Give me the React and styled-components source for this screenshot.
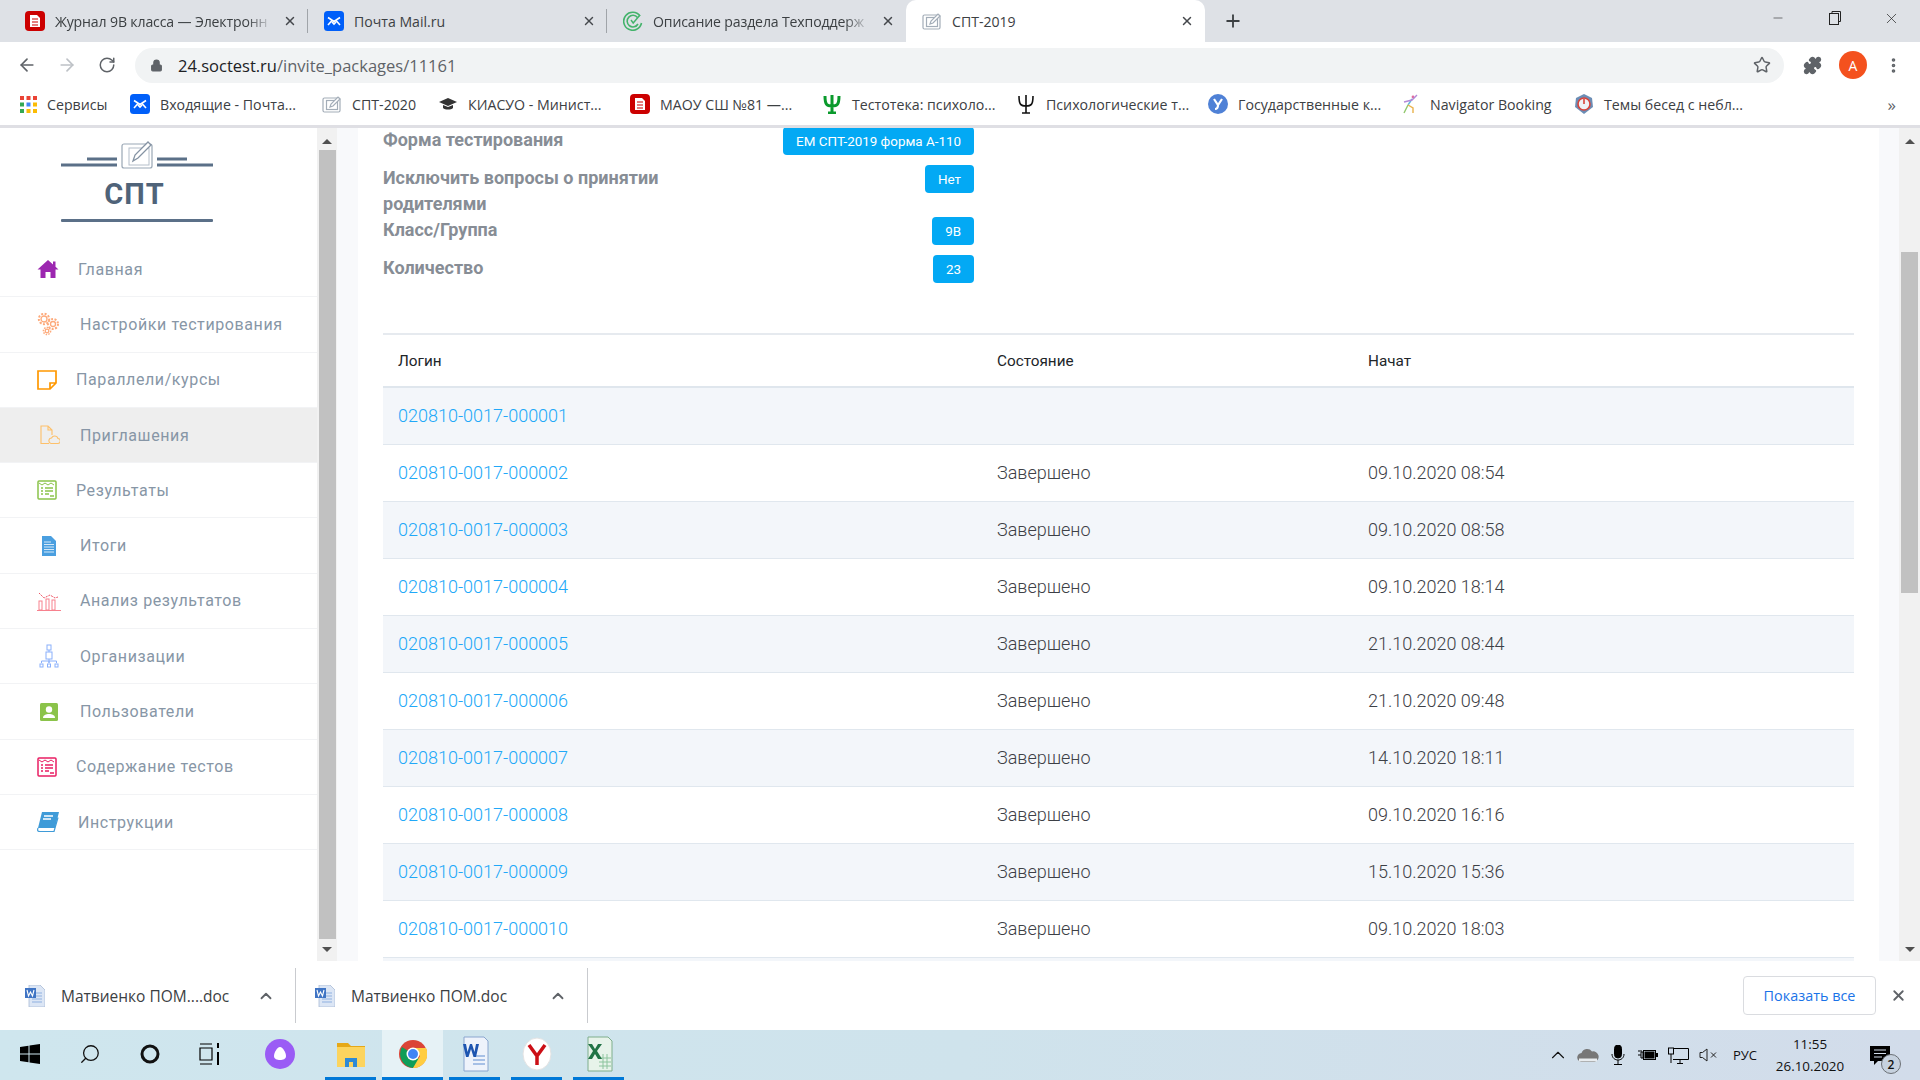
import React from "react";
import styled, { createGlobalStyle } from "styled-components";
import { ArrowLeft, ArrowRight, RotateCw, Lock, Star, Puzzle, MoreVertical, Plus, X, Minus, ChevronUp, Search } from "lucide-react";

const GlobalStyle = createGlobalStyle`
    html, body { margin: 0; padding: 0; background: #fff; }
    * { box-sizing: border-box; }
`;

const UI_FONT = `"Open Sans", "Noto Sans", sans-serif`;

const Page = styled.div`
    width: 1920px;
    height: 1080px;
    display: flex;
    flex-direction: column;
    overflow: hidden;
    font-family: Roboto, sans-serif;
`;

/* browser chrome */
const TabStrip = styled.div`
    height: 42px;
    flex: none;
    background: #dee1e6;
    display: flex;
    align-items: stretch;
    padding-left: 9px;
    font-family: ${UI_FONT};
`;

const Tab = styled.div`
    width: 299px;
    display: flex;
    align-items: center;
    padding: 0 11px 0 16px;
    gap: 10px;
    position: relative;
    background: ${p => (p.$active ? "#fff" : "transparent")};
    border-radius: ${p => (p.$active ? "10px 10px 0 0" : "0")};
`;

const TabSep = styled.span`
    position: absolute;
    right: 0;
    top: 9px;
    bottom: 9px;
    width: 1px;
    background: #a0a4a9;
`;

const TabTitle = styled.span`
    flex: 1;
    min-width: 0;
    font-size: 14.1px;
    color: #3c4043;
    white-space: nowrap;
    overflow: hidden;
    ${p => p.$fade && "letter-spacing: -0.15px; mask-image: linear-gradient(to right, #000 88%, transparent 100%);"}
`;

const TabClose = styled.span`
    width: 14px;
    display: flex;
    justify-content: center;
    color: #45484c;
`;

const NewTab = styled.div`
    width: 56px;
    display: flex;
    align-items: center;
    justify-content: center;
    color: #3c4043;
`;

const WindowControls = styled.div`
    margin-left: auto;
    display: flex;
    align-items: flex-start;
    color: #222;
`;

const WindowButton = styled.div`
    width: 57px;
    height: 36px;
    display: flex;
    align-items: center;
    justify-content: center;
`;

const Toolbar = styled.div`
    height: 41px;
    flex: none;
    background: #fff;
    display: flex;
    align-items: center;
    padding: 5px 0 0 7px;
    color: #5f6368;
`;

const NavButton = styled.div`
    width: 40px;
    display: flex;
    justify-content: center;
    color: ${p => (p.$off ? "#bdc1c6" : "#5f6368")};
`;

const Omnibox = styled.div`
    width: 1649px;
    height: 35px;
    margin-left: 8px;
    border-radius: 18px;
    background: #f1f3f4;
    display: flex;
    align-items: center;
    padding: 0 13px 0 15px;
    font-family: ${UI_FONT};
    font-size: 16.5px;
    color: #5f6368;
`;

const UrlText = styled.span`
    margin-left: 15px;
    flex: 1;
    b { font-weight: 400; color: #202124; }
`;

const ToolbarRight = styled.div`
    display: flex;
    align-items: center;
    margin-left: 19px;
    gap: 17px;
`;

const Avatar = styled.div`
    width: 28px;
    height: 28px;
    border-radius: 50%;
    background: #f4511e;
    color: #fff;
    font-family: ${UI_FONT};
    font-size: 14px;
    display: flex;
    align-items: center;
    justify-content: center;
`;

const BookmarksBar = styled.div`
    height: 42px;
    flex: none;
    background: #fff;
    display: flex;
    align-items: center;
    padding-left: 20px;
    font-family: ${UI_FONT};
    font-size: 14.2px;
    color: #3c4043;
`;

const Bookmark = styled.div`
    width: ${p => p.$w}px;
    flex: none;
    display: flex;
    align-items: center;
    gap: 10px;
    white-space: nowrap;
`;

const BookmarkMore = styled.div`
    margin-left: auto;
    margin-right: 24px;
    font-size: 17px;
    color: #5f6368;
    line-height: 1;
`;

const ChromeLine = styled.div`
    height: 3px;
    flex: none;
    background: #dfdfe4;
`;

/* page */
const Viewport = styled.div`
    flex: 1;
    min-height: 0;
    display: flex;
    background: #fff;
`;

const Sidebar = styled.nav`
    width: 317px;
    flex: none;
    overflow: hidden;
`;

const LogoBlock = styled.div`
    height: 114px;
    padding-top: 10px;
    display: flex;
    flex-direction: column;
    align-items: center;
    width: 273px;
`;

const LogoText = styled.div`
    font-size: 29px;
    font-weight: 700;
    color: #4f6379;
    letter-spacing: 1px;
    line-height: 30px;
    margin: 6px 4px 0 0;
`;

const LogoRule = styled.div`
    width: 152px;
    height: 3px;
    margin-top: 10px;
    background: #5b7088;
    border-radius: 1px;
`;

const MenuItem = styled.div`
    height: 55.3px;
    display: flex;
    align-items: center;
    padding-left: 37px;
    border-bottom: 1px solid #f2f3f5;
    background: ${p => (p.$active ? "#eeeeee" : "transparent")};
`;

const MenuIcon = styled.span`
    width: ${p => p.$w}px;
    padding-left: ${p => p.$ox || 0}px;
    flex: none;
    display: flex;
    align-items: center;
`;

const MenuLabel = styled.span`
    font-size: 16px;
    letter-spacing: 0.6px;
    color: #8796a6;
    white-space: nowrap;
`;

const Scrollbar = styled.div`
    width: ${p => p.$w}px;
    flex: none;
    background: #f1f1f1;
    display: flex;
    flex-direction: column;
    padding: 0 2px;
`;

const ScrollArrow = styled.div`
    width: 0;
    height: 0;
    border-left: 5px solid transparent;
    border-right: 5px solid transparent;
    ${p => (p.$down
        ? "border-top: 5px solid #505050; margin-top: auto; margin-bottom: 9px;"
        : "border-bottom: 5px solid #505050; margin-top: 11px;")}
    align-self: center;
`;

const ScrollThumb = styled.div`
    margin-top: ${p => p.$top}px;
    height: ${p => p.$h}px;
    width: 17px;
    background: #c1c1c1;
`;

const Gutter = styled.div`
    width: ${p => p.$w}px;
    flex: none;
    background: #f8f9fb;
`;

const Main = styled.main`
    flex: 1;
    min-width: 0;
    padding: 0 25px;
    overflow: hidden;
`;

const InfoList = styled.div`
    width: 591px;
    height: 206px;
    margin-top: -1px;
`;

const InfoRow = styled.div`
    display: flex;
    justify-content: space-between;
    align-items: flex-start;
    margin-bottom: ${p => p.$mb}px;
`;

const InfoLabel = styled.div`
    width: 290px;
    font-size: 18px;
    font-weight: 700;
    line-height: 26px;
    color: #878d95;
`;

const Badge = styled.span`
    height: 28px;
    padding: 0 13px;
    border-radius: 4px;
    background: #03a9f4;
    color: #fff;
    font-size: 13.4px;
    display: flex;
    align-items: center;
    white-space: nowrap;
`;

const Table = styled.table`
    width: 1471px;
    table-layout: fixed;
    border-collapse: collapse;
`;

const HeadCell = styled.th`
    height: 53px;
    padding: 0 15px;
    text-align: left;
    font-size: 15.3px;
    font-weight: 400;
    color: #212529;
    border-top: 2px solid #e6eaef;
    border-bottom: 2px solid #dfe6ed;
`;

const Row = styled.tr`
    background: ${p => (p.$even ? "#fff" : "#f3f6fa")};
`;

const Cell = styled.td`
    height: 57px;
    padding: 0 15px;
    font-size: 18px;
    font-weight: 300;
    color: #3d4046;
    border-bottom: 1px solid #e0e7ee;
`;

const LoginLink = styled.a`
    color: #20a8f8;
    text-decoration: none;
`;

/* downloads shelf */
const Shelf = styled.div`
    height: 69px;
    flex: none;
    background: #fff;
    display: flex;
    align-items: center;
    font-family: ${UI_FONT};
    font-size: 15.5px;
    color: #3c4043;
`;

const DownloadItem = styled.div`
    width: ${p => p.$w}px;
    height: 55px;
    flex: none;
    display: flex;
    align-items: center;
    padding-left: ${p => p.$pl}px;
    border-right: 1px solid #c9cbcf;
`;

const DownloadName = styled.span`
    margin-left: 16px;
    white-space: nowrap;
`;

const DownloadChevron = styled.span`
    margin-left: auto;
    margin-right: 20px;
    display: flex;
    color: #5f6368;
`;

const ShowAll = styled.button`
    margin-left: auto;
    width: 133px;
    height: 39px;
    background: #fff;
    border: 1px solid #dadce0;
    border-radius: 4px;
    color: #1a73e8;
    font-family: ${UI_FONT};
    font-size: 14.4px;
    padding: 0;
`;

const ShelfClose = styled.span`
    width: 44px;
    display: flex;
    justify-content: center;
    color: #5f6368;
`;

/* taskbar */
const Taskbar = styled.div`
    height: 50px;
    flex: none;
    background: linear-gradient(to right, #cfe6ee, #cfe3ec 50%, #d2dcea);
    display: flex;
    align-items: stretch;
    font-family: ${UI_FONT};
    color: #111;
`;

const TaskSlot = styled.div`
    width: ${p => p.$w}px;
    flex: none;
    display: flex;
    align-items: center;
    justify-content: center;
    margin-left: ${p => p.$ml || 0}px;
    background: ${p => (p.$active ? "#e6f2f6" : "transparent")};
    border-bottom: ${p => (p.$open ? "3px solid #0078d7" : "3px solid transparent")};
`;

const Tray = styled.div`
    margin-left: auto;
    margin-right: 13px;
    display: flex;
    align-items: center;
`;

const TrayIcon = styled.span`
    width: ${p => p.$w || 30}px;
    display: flex;
    justify-content: center;
`;

const TrayLang = styled.span`
    font-size: 13px;
    width: 44px;
    text-align: center;
`;

const Clock = styled.div`
    width: 86px;
    text-align: center;
    font-size: 13.4px;
    line-height: 22px;
`;

const NotifyBox = styled.div`
    width: 54px;
    height: 50px;
    position: relative;
    display: flex;
    align-items: center;
    justify-content: center;
`;

const NotifyCount = styled.span`
    position: absolute;
    left: 28px;
    top: 24px;
    width: 20px;
    height: 20px;
    border-radius: 50%;
    background: #c6d1de;
    border: 1px solid #6b7075;
    font-size: 12px;
    font-weight: 600;
    display: flex;
    align-items: center;
    justify-content: center;
`;

/* drawings */
const RedDoc = () => (
    <svg width="20" height="20" viewBox="0 0 20 20">
        <rect width="20" height="20" rx="4" fill="#cc0000" />
        <path d="M5 4h7l3 3v9H5z" fill="#fff" />
        <path d="M7 8h6M7 11h6M7 14h6" stroke="#cc0000" strokeWidth="1.2" />
    </svg>
);

const MailIcon = () => (
    <svg width="20" height="20" viewBox="0 0 20 20">
        <rect width="20" height="20" rx="3.5" fill="#005ff9" />
        <path d="M4 6.5l6 4 6-4M4 14l4-4.5M16 14l-4-4.5M8 11l2 2 2-2" stroke="#fff" strokeWidth="1.6" fill="none" />
    </svg>
);

const SwirlIcon = () => (
    <svg width="20" height="20" viewBox="0 0 20 20" fill="none" stroke="#43b36b" strokeWidth="1.6">
        <path d="M17 5A9 9 0 1 0 18.5 12" />
        <path d="M14.5 6.5A5.8 5.8 0 1 0 15 13" />
        <path d="M8 9l2.2 3L17 4" strokeWidth="1.4" />
    </svg>
);

const TabletIcon = ({ size = 20, color = "#a3adb8" }) => (
    <svg width={size} height={size} viewBox="0 0 20 20" fill="none" stroke={color} strokeWidth="1.2">
        <rect x="1" y="4" width="17" height="14" rx="1.5" />
        <rect x="4.5" y="6.5" width="11" height="9" />
        <path d="M8 13l1-3 7-7 2 2-7 7z" fill="#fff" />
    </svg>
);

const AppsGrid = () => {
    const colors = ["#ea4335", "#ea4335", "#ea4335", "#34a853", "#4285f4", "#fbbc05", "#34a853", "#fbbc05", "#fbbc05"];
    return (
        <svg width="17" height="17" viewBox="0 0 17 17">
            {colors.map((c, i) => (
                <rect key={i} x={(i % 3) * 6.5} y={Math.floor(i / 3) * 6.5} width="4" height="4" fill={c} />
            ))}
        </svg>
    );
};

const CapIcon = () => (
    <svg width="20" height="20" viewBox="0 0 20 20" fill="#333">
        <path d="M1 8l9-4 9 4-9 4z" />
        <path d="M5 11v3c2 2 8 2 10 0v-3l-5 2z" />
    </svg>
);

const PsiIcon = ({ color, w = 700 }) => (
    <svg width="20" height="20" viewBox="0 0 20 20" fill="none" stroke={color} strokeWidth={w === 700 ? 3 : 1.6}>
        <path d="M10 1v18M6 19h8M3 2c0 9 2 10 7 10s7-1 7-10" />
    </svg>
);

const YCircle = () => (
    <svg width="20" height="20" viewBox="0 0 20 20">
        <circle cx="10" cy="10" r="10" fill="#4f81d6" />
        <path d="M6 5l4 6 4-6M10 11c0 3-1 4-3 4" stroke="#fff" strokeWidth="2.2" fill="none" />
    </svg>
);

const DancerIcon = () => (
    <svg width="20" height="20" viewBox="0 0 20 20" fill="none" strokeWidth="1.4">
        <circle cx="13" cy="3" r="1.4" fill="#e06c9f" />
        <path d="M12 5L8 11" stroke="#5fb6d9" />
        <path d="M8 11L4 19" stroke="#8fc76b" />
        <path d="M8 11l5 3 0 5" stroke="#e9b24c" />
        <path d="M17 1l-5 5-8 2" stroke="#b48ad8" />
    </svg>
);

const PowerIcon = () => (
    <svg width="20" height="20" viewBox="0 0 20 20">
        <path d="M10 0l8 4 1 9-9 7-9-7 1-9z" fill="#6b8db5" />
        <circle cx="10" cy="10" r="6" fill="#eef2f6" stroke="#d9433a" strokeWidth="1.6" />
        <path d="M10 5v5" stroke="#d9433a" strokeWidth="1.6" />
    </svg>
);

const HomeIcon = () => (
    <svg width="22" height="20" viewBox="0 0 22 20" fill="#9c27b0">
        <path d="M11 1L0.5 10.5h3V19h5v-6h5v6h5v-8.5h3l-3-2.7V2.5h-2.5v3z" />
    </svg>
);

const GearsIcon = () => (
    <svg width="24" height="24" viewBox="0 0 24 24" fill="none" stroke="#fdaa7b" strokeWidth="1.3">
        <circle cx="7" cy="7" r="3" />
        <circle cx="7" cy="7" r="5.2" strokeDasharray="2 1.5" strokeWidth="2" />
        <circle cx="16" cy="12" r="2.5" />
        <circle cx="16" cy="12" r="5" strokeDasharray="2 1.5" strokeWidth="2" />
        <circle cx="10" cy="19" r="1.8" />
        <circle cx="10" cy="19" r="3.6" strokeDasharray="1.5 1.2" strokeWidth="1.5" />
    </svg>
);

const NoteIcon = () => (
    <svg width="20" height="20" viewBox="0 0 20 20" fill="none" stroke="#ff9800" strokeWidth="1.7">
        <path d="M1 1h18v12l-6 6H1zM19 13h-6v6" />
    </svg>
);

const InviteIcon = () => (
    <svg width="20" height="20" viewBox="0 0 20 20" fill="none" stroke="#fdc06a" strokeWidth="1.1">
        <path d="M9 18.5H1V1h7l4 4v5M8 1v4h4" />
        <path d="M11 18.5h6.5a2.5 2.5 0 0 0 .5-5 3.5 3.5 0 0 0-6.5-.5 2.8 2.8 0 0 0-.5 5.5z" />
    </svg>
);

const ListIcon = ({ color }) => (
    <svg width="20" height="20" viewBox="0 0 20 20" fill="none" stroke={color} strokeWidth="1.5">
        <rect x="1" y="1" width="18" height="18" rx="1" />
        <path d="M2 3l3 2 3-2 3 2 3-2 3 2" strokeWidth="1" />
        <path d="M4 8h2M8 8h8M4 11h2M8 11h8M4 14h2M8 14h4M13 16h4" />
    </svg>
);

const FileIcon = () => (
    <svg width="14" height="20" viewBox="0 0 14 20">
        <path d="M0 0h9l5 5v15H0z" fill="#4a9fe0" />
        <path d="M2 6h7M2 8.5h10M2 11h10M2 13.5h10M2 16h10" stroke="#d5e9f8" strokeWidth="1" />
    </svg>
);

const ChartIcon = () => (
    <svg width="24" height="20" viewBox="0 0 24 20" fill="none" stroke="#f7818e" strokeWidth="1">
        <path d="M2 2l5 5 6-3 5 3 3-1" stroke="#ee5565" strokeDasharray="2 1" />
        <rect x="2" y="10" width="3" height="9" />
        <rect x="9" y="8" width="3" height="11" />
        <rect x="15" y="9" width="3" height="10" />
        <path d="M0 19.5h24" />
    </svg>
);

const OrgIcon = () => (
    <svg width="20" height="24" viewBox="0 0 20 24" fill="none" stroke="#8ab0fb" strokeWidth="1">
        <rect x="8" y="1" width="4" height="5" />
        <rect x="7" y="8" width="6" height="7" />
        <path d="M10 6v2M10 15v4M2.5 19v-2h15v2M10 17v2" />
        <rect x="1" y="20" width="3" height="3" />
        <rect x="8.5" y="20" width="3" height="3" />
        <rect x="16" y="20" width="3" height="3" />
    </svg>
);

const UserIcon = () => (
    <svg width="18" height="18" viewBox="0 0 18 18">
        <rect width="18" height="18" rx="1.5" fill="#8bc34a" />
        <circle cx="9" cy="6.5" r="3.2" fill="#fff" />
        <path d="M3 15c0-3 3-4 6-4s6 1 6 4z" fill="#fff" />
    </svg>
);

const BookIcon = () => (
    <svg width="22" height="20" viewBox="0 0 22 20">
        <path d="M5 0h17l-4 16H1z" fill="#3f9bd8" />
        <path d="M1 16c-1 3 0 3.5 2 3.5h14l4-14" fill="none" stroke="#3f9bd8" strokeWidth="1.2" />
        <path d="M7 4h9M6 7h8" stroke="#fff" strokeWidth="1.3" />
    </svg>
);

const LogoMark = () => (
    <svg width="152" height="35" viewBox="0 0 152 35" fill="none">
        <path d="M0 27h56M96 27h56M26 21h30M96 21h30" stroke="#5b7088" strokeWidth="3" />
        <rect x="61" y="6" width="30" height="24" rx="2" stroke="#9aa7b5" strokeWidth="1.2" />
        <rect x="68" y="10" width="20" height="17" stroke="#b4bec9" strokeWidth="1" />
        <path d="M72 23l2-6 13-13 3 3-13 13z" fill="#fff" stroke="#8593a3" strokeWidth="1.3" />
    </svg>
);

const WordDocIcon = () => (
    <svg width="20" height="22" viewBox="0 0 20 22">
        <path d="M4 0h11l5 5v17H4z" fill="#dce6f5" stroke="#a9bbd6" strokeWidth="0.8" />
        <path d="M7 8h10M7 11h10M7 14h10M7 17h10" stroke="#8fb0e0" strokeWidth="1" />
        <rect x="0" y="3" width="11" height="10" fill="#3f74c4" />
        <path d="M2 5l1.5 6 2-4 2 4L9 5" stroke="#fff" strokeWidth="1.1" fill="none" />
    </svg>
);

const WinLogo = () => (
    <svg width="20" height="20" viewBox="0 0 20 20" fill="#000">
        <path d="M0 3l8.5-1.2V9.500H0zM9.500 1.600L20 0v9.500H9.500zM0 10.500h8.500v7.700L0 17zM9.500 10.500H20V20L9.500 18.400z" />
    </svg>
);

const TaskViewIcon = () => (
    <svg width="22" height="26" viewBox="0 0 22 26" fill="none" stroke="#000" strokeWidth="1.2">
        <path d="M1 3h12M1 23h12M1 7h12v12H1z" />
        <path d="M19 2v5M19 11v13" strokeWidth="2" />
    </svg>
);

const AliceIcon = () => (
    <svg width="30" height="30" viewBox="0 0 30 30">
        <circle cx="15" cy="15" r="15" fill="#9a5cf5" />
        <path d="M15 8c3 0 6 6 6 9s-3 4-6 4-6-1-6-4 3-9 6-9z" fill="#fff" />
    </svg>
);

const FolderIcon = () => (
    <svg width="28" height="28" viewBox="0 0 28 28">
        <path d="M0 3h11l3 3h14v4H0z" fill="#e6a817" />
        <rect x="0" y="7" width="28" height="20" fill="#fcd45e" />
        <path d="M8 27v-9h12v9h-4v-5h-4v5z" fill="#2d8ad6" />
    </svg>
);

const ChromeIcon = () => (
    <svg width="28" height="28" viewBox="0 0 28 28">
        <circle cx="14" cy="14" r="14" fill="#db4437" />
        <path d="M14 14L3 7A14 14 0 0 0 14 28l7-8z" fill="#0f9d58" />
        <path d="M14 8h13A14 14 0 0 1 14 28l7-12z" fill="#ffcd40" />
        <circle cx="14" cy="14" r="6.5" fill="#fff" />
        <circle cx="14" cy="14" r="5" fill="#4285f4" />
    </svg>
);

const WordIcon = () => (
    <svg width="28" height="36" viewBox="0 0 28 36">
        <path d="M3 1h20l4 4v30H3z" fill="#eef3fb" stroke="#8aa6cf" />
        <path d="M12 24h12M12 28h12M14 20h10" stroke="#8fb0e0" strokeWidth="1.5" />
        <path d="M2 8l3 13h2.5l2.5-8 2.5 8H15l3-13h-3l-1.5 8L11 8H9l-2.5 8L5 8z" fill="#1d55b0" />
    </svg>
);

const YandexIcon = () => (
    <svg width="30" height="34" viewBox="0 0 30 34">
        <ellipse cx="15" cy="17" rx="14" ry="16" fill="#fff" stroke="#e3e3e3" />
        <path d="M7 8l8 11v9M23 8l-8 11" stroke="#cc0f16" strokeWidth="3.5" fill="none" />
    </svg>
);

const ExcelIcon = () => (
    <svg width="28" height="36" viewBox="0 0 28 36">
        <path d="M3 1h20l4 4v30H3z" fill="#e7f3ea" stroke="#7fae8c" />
        <path d="M14 22h12M14 26h12M14 30h12M18 18v15M22 18v15" stroke="#8cc49d" strokeWidth="1" />
        <path d="M3 8l5 7-5 8h4l3-5 3 5h4l-5-8 5-7h-4l-3 5-3-5z" fill="#217346" />
    </svg>
);

const CloudIcon = () => (
    <svg width="22" height="14" viewBox="0 0 22 14">
        <path d="M5 14a4.5 4.5 0 0 1-.5-9A6 6 0 0 1 15 3.5 4.8 4.8 0 0 1 17.5 14z" fill="#777" />
        <path d="M2 12h18" stroke="#e8ecef" strokeWidth="3" />
    </svg>
);

const MicIcon = () => (
    <svg width="14" height="20" viewBox="0 0 14 20" fill="none" stroke="#000">
        <rect x="3.5" y="0" width="7" height="13" rx="3.5" fill="#000" />
        <path d="M1 9c0 8 12 8 12 0M7 15v4M3 19.5h8" />
    </svg>
);

const BatteryIcon = () => (
    <svg width="20" height="14" viewBox="0 0 20 14" fill="none" stroke="#000">
        <path d="M0 7h3M3 4v6h2V4zM1 2v2M3 2v2" />
        <rect x="5.5" y="2.5" width="12" height="9" />
        <rect x="7" y="4" width="9" height="6" fill="#000" />
        <path d="M19 5v4" strokeWidth="2" />
    </svg>
);

const NetworkIcon = () => (
    <svg width="21" height="17" viewBox="0 0 21 17" fill="none" stroke="#000">
        <path d="M5 1.5h15.5v11H5M12 13v3M9 16.5h6M3 7v9" />
        <rect x="0.5" y="1" width="5" height="6" fill="#d0dcea" />
    </svg>
);

const VolumeIcon = () => (
    <svg width="19" height="14" viewBox="0 0 19 14" fill="none" stroke="#222">
        <path d="M1 4.5h2.5L8 1v12L3.5 9.5H1z" />
        <path d="M12 4.5l5 5M17 4.5l-5 5" />
    </svg>
);

const ChatIcon = () => (
    <svg width="20" height="19" viewBox="0 0 20 19">
        <path d="M0 0h20v15H8l-4 4v-4H0z" fill="#000" />
        <path d="M4 4h12M4 7.5h12M4 11h8" stroke="#d2dcea" strokeWidth="1" />
    </svg>
);

const tabs = [
    { icon: <RedDoc />, title: "Журнал 9В класса — Электронн", fade: true, sep: true },
    { icon: <MailIcon />, title: "Почта Mail.ru", sep: true },
    { icon: <SwirlIcon />, title: "Описание раздела Техподдерж", fade: true },
    { icon: <TabletIcon />, title: "СПТ-2019", active: true },
];

const bookmarks = [
    { icon: <AppsGrid />, title: "Сервисы", w: 110 },
    { icon: <MailIcon />, title: "Входящие - Почта...", w: 192 },
    { icon: <TabletIcon />, title: "СПТ-2020", w: 116 },
    { icon: <CapIcon />, title: "КИАСУО - Минист...", w: 192 },
    { icon: <RedDoc />, title: "МАОУ СШ №81 —...", w: 192 },
    { icon: <PsiIcon color="#0a9a2c" />, title: "Тестотека: психоло...", w: 194 },
    { icon: <PsiIcon color="#111" w={400} />, title: "Психологические т...", w: 192 },
    { icon: <YCircle />, title: "Государственные к...", w: 192 },
    { icon: <DancerIcon />, title: "Navigator Booking", w: 174 },
    { icon: <PowerIcon />, title: "Темы бесед с небл...", w: 190 },
];

const menu = [
    { icon: <HomeIcon />, label: "Главная", w: 41 },
    { icon: <GearsIcon />, label: "Настройки тестирования", w: 43 },
    { icon: <NoteIcon />, label: "Параллели/курсы", w: 39 },
    { icon: <InviteIcon />, label: "Приглашения", w: 43, ox: 3 },
    { icon: <ListIcon color="#8bc34a" />, label: "Результаты", w: 39 },
    { icon: <FileIcon />, label: "Итоги", w: 43, ox: 5 },
    { icon: <ChartIcon />, label: "Анализ результатов", w: 43 },
    { icon: <OrgIcon />, label: "Организации", w: 43, ox: 2 },
    { icon: <UserIcon />, label: "Пользователи", w: 43, ox: 3 },
    { icon: <ListIcon color="#e91e63" />, label: "Содержание тестов", w: 39 },
    { icon: <BookIcon />, label: "Инструкции", w: 41 },
];

const rows = [
    ["020810-0017-000001", "", ""],
    ["020810-0017-000002", "Завершено", "09.10.2020 08:54"],
    ["020810-0017-000003", "Завершено", "09.10.2020 08:58"],
    ["020810-0017-000004", "Завершено", "09.10.2020 18:14"],
    ["020810-0017-000005", "Завершено", "21.10.2020 08:44"],
    ["020810-0017-000006", "Завершено", "21.10.2020 09:48"],
    ["020810-0017-000007", "Завершено", "14.10.2020 18:11"],
    ["020810-0017-000008", "Завершено", "09.10.2020 16:16"],
    ["020810-0017-000009", "Завершено", "15.10.2020 15:36"],
    ["020810-0017-000010", "Завершено", "09.10.2020 18:03"],
    ["", "", ""],
];

export default function App() {
    return (
        <Page>
            <GlobalStyle />
            <TabStrip>
                {tabs.map(t => (
                    <Tab key={t.title} $active={t.title === "СПТ-2019"}>
                        {t.icon}
                        <TabTitle $fade={t.fade}>{t.title}</TabTitle>
                        <TabClose><X size={14} strokeWidth={2.5} /></TabClose>
                        {t.sep && <TabSep />}
                    </Tab>
                ))}
                <NewTab><Plus size={20} strokeWidth={2.2} /></NewTab>
                <WindowControls>
                    <WindowButton><Minus size={14} strokeWidth={1} /></WindowButton>
                    <WindowButton>
                        <svg width="12" height="14" viewBox="0 0 12 14" fill="none" stroke="#222">
                            <rect x="0.5" y="2.5" width="9" height="11" />
                            <path d="M3 2.5v-2h8.5v10h-2" />
                        </svg>
                    </WindowButton>
                    <WindowButton><X size={17} strokeWidth={1} /></WindowButton>
                </WindowControls>
            </TabStrip>

            <Toolbar>
                <NavButton><ArrowLeft size={20} /></NavButton>
                <NavButton $off><ArrowRight size={20} /></NavButton>
                <NavButton><RotateCw size={18} /></NavButton>
                <Omnibox>
                    <Lock size={13} fill="#5f6368" />
                    <UrlText><b>24.soctest.ru</b>/invite_packages/11161</UrlText>
                    <Star size={18} />
                </Omnibox>
                <ToolbarRight>
                    <Puzzle size={19} fill="#5f6368" />
                    <Avatar>A</Avatar>
                    <MoreVertical size={19} strokeWidth={2.6} />
                </ToolbarRight>
            </Toolbar>

            <BookmarksBar>
                {bookmarks.map(b => (
                    <Bookmark key={b.title} $w={b.w}>
                        {b.icon}
                        <span>{b.title}</span>
                    </Bookmark>
                ))}
                <BookmarkMore>»</BookmarkMore>
            </BookmarksBar>
            <ChromeLine />

            <Viewport>
                <Sidebar>
                    <LogoBlock>
                        <LogoMark />
                        <LogoText>СПТ</LogoText>
                        <LogoRule />
                    </LogoBlock>
                    {menu.map(m => (
                        <MenuItem key={m.label} $active={m.label === "Приглашения"}>
                            <MenuIcon $w={m.w} $ox={m.ox}>{m.icon}</MenuIcon>
                            <MenuLabel>{m.label}</MenuLabel>
                        </MenuItem>
                    ))}
                </Sidebar>
                <Scrollbar $w={20}>
                    <ScrollArrow />
                    <ScrollThumb $top={6} $h={789} />
                    <ScrollArrow $down />
                </Scrollbar>
                <Gutter $w={21} />

                <Main>
                    <InfoList>
                        <InfoRow $mb={10}>
                            <InfoLabel>Форма тестирования</InfoLabel>
                            <Badge>ЕМ СПТ-2019 форма А-110</Badge>
                        </InfoRow>
                        <InfoRow $mb={0}>
                            <InfoLabel>Исключить вопросы о принятии родителями</InfoLabel>
                            <Badge>Нет</Badge>
                        </InfoRow>
                        <InfoRow $mb={10}>
                            <InfoLabel>Класс/Группа</InfoLabel>
                            <Badge>9В</Badge>
                        </InfoRow>
                        <InfoRow $mb={0}>
                            <InfoLabel>Количество</InfoLabel>
                            <Badge>23</Badge>
                        </InfoRow>
                    </InfoList>
                    <Table>
                        <colgroup>
                            <col width="599" />
                            <col width="371" />
                            <col />
                        </colgroup>
                        <thead>
                            <tr>
                                <HeadCell>Логин</HeadCell>
                                <HeadCell>Состояние</HeadCell>
                                <HeadCell>Начат</HeadCell>
                            </tr>
                        </thead>
                        <tbody>
                            {rows.map((r, i) => (
                                <Row key={i} $even={i % 2 === 1}>
                                    <Cell><LoginLink href="#">{r[0]}</LoginLink></Cell>
                                    <Cell>{r[1]}</Cell>
                                    <Cell>{r[2]}</Cell>
                                </Row>
                            ))}
                        </tbody>
                    </Table>
                </Main>

                <Gutter $w={20} />
                <Scrollbar $w={21}>
                    <ScrollArrow />
                    <ScrollThumb $top={108} $h={341} />
                    <ScrollArrow $down />
                </Scrollbar>
            </Viewport>

            <Shelf>
                <DownloadItem $w={296} $pl={25}>
                    <WordDocIcon />
                    <DownloadName>Матвиенко ПОМ....doc</DownloadName>
                    <DownloadChevron><ChevronUp size={18} strokeWidth={2.4} /></DownloadChevron>
                </DownloadItem>
                <DownloadItem $w={292} $pl={19}>
                    <WordDocIcon />
                    <DownloadName>Матвиенко ПОМ.doc</DownloadName>
                    <DownloadChevron><ChevronUp size={18} strokeWidth={2.4} /></DownloadChevron>
                </DownloadItem>
                <ShowAll>Показать все</ShowAll>
                <ShelfClose><X size={17} strokeWidth={2.6} /></ShelfClose>
            </Shelf>

            <Taskbar>
                <TaskSlot $w={60}><WinLogo /></TaskSlot>
                <TaskSlot $w={60}><Search size={22} strokeWidth={1.4} style={{ transform: "scaleX(-1)" }} /></TaskSlot>
                <TaskSlot $w={60}>
                    <svg width="20" height="20" viewBox="0 0 20 20" fill="none" stroke="#111" strokeWidth="3"><circle cx="10" cy="10" r="8" /></svg>
                </TaskSlot>
                <TaskSlot $w={60}><TaskViewIcon /></TaskSlot>
                <TaskSlot $w={60} $ml={10}><AliceIcon /></TaskSlot>
                <TaskSlot $w={51} $ml={15} $open><FolderIcon /></TaskSlot>
                <TaskSlot $w={61} $ml={6} $open $active><ChromeIcon /></TaskSlot>
                <TaskSlot $w={51} $ml={6} $open><WordIcon /></TaskSlot>
                <TaskSlot $w={51} $ml={11} $open><YandexIcon /></TaskSlot>
                <TaskSlot $w={51} $ml={11} $open><ExcelIcon /></TaskSlot>
                <Tray>
                    <TrayIcon><ChevronUp size={22} strokeWidth={1.2} /></TrayIcon>
                    <TrayIcon><CloudIcon /></TrayIcon>
                    <TrayIcon><MicIcon /></TrayIcon>
                    <TrayIcon><BatteryIcon /></TrayIcon>
                    <TrayIcon><NetworkIcon /></TrayIcon>
                    <TrayIcon><VolumeIcon /></TrayIcon>
                    <TrayLang>РУС</TrayLang>
                    <Clock>11:55<br />26.10.2020</Clock>
                    <NotifyBox>
                        <ChatIcon />
                        <NotifyCount>2</NotifyCount>
                    </NotifyBox>
                </Tray>
            </Taskbar>
        </Page>
    );
}
